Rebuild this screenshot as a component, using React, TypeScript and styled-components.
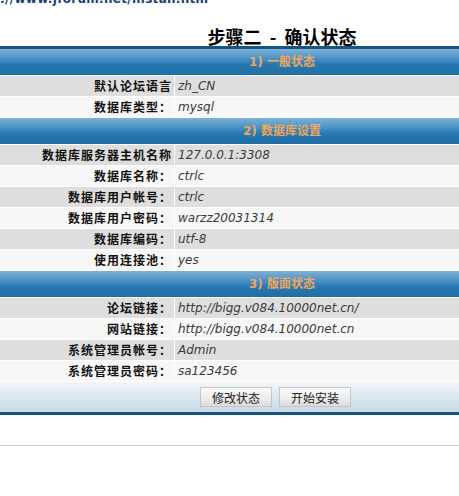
import React from 'react';
import styled, { createGlobalStyle } from 'styled-components';

const GlobalStyle = createGlobalStyle`
  html, body {
    margin: 0;
    padding: 0;
    background: #ffffff;
    overflow: hidden;
  }
`;

const Page = styled.div`
  width: 564px;
  font-family: 'DejaVu Sans', Verdana, sans-serif;
`;

const UrlText = styled.div`
  margin-top: -8px;
  height: 14px;
  line-height: 14px;
  font-size: 12px;
  font-weight: bold;
  letter-spacing: 0.3px;
  color: #1c3c7a;
  white-space: nowrap;
`;

const Title = styled.h1`
  margin: 19px 0 0;
  height: 21px;
  line-height: 22px;
  text-align: center;
  font-family: 'Noto Sans CJK SC', sans-serif;
  font-size: 18px;
  font-weight: bold;
  color: #000;
  white-space: pre;
`;

const Panel = styled.div`
  display: grid;
  grid-template-columns: 174px 1fr;
  column-gap: 1px;
  row-gap: 1px;
  background: #ffffff;
  border-top: 3px solid #17557f;
  border-bottom: 3px solid #17557f;
  width: 100vw;
  min-width: 564px;
`;

const SectionHeader = styled.div`
  grid-column: 1 / -1;
  height: 26px;
  line-height: 26px;
  text-align: center;
  font-family: 'DejaVu Sans', 'Noto Sans CJK SC', sans-serif;
  font-size: 12px;
  font-weight: bold;
  color: #f2a65c;
  background: linear-gradient(to bottom, #7db2d9 0%, #4d93c5 35%, #2878b0 60%, #1f6ea5 100%);
  width: 564px;
`;

const Label = styled.div<{ $alt: boolean }>`
  height: 20px;
  line-height: 20px;
  padding-right: 2px;
  text-align: right;
  font-family: 'Noto Sans CJK SC', sans-serif;
  font-size: 12px;
  font-weight: bold;
  letter-spacing: 1px;
  color: #111;
  white-space: nowrap;
  background: ${(p) => (p.$alt ? '#f7f7f7' : '#dedede')};
`;

const Value = styled.div<{ $alt: boolean }>`
  height: 20px;
  line-height: 20px;
  padding-left: 3px;
  font-family: 'DejaVu Sans', Verdana, sans-serif;
  font-size: 12px;
  font-style: italic;
  color: #3a3a3a;
  white-space: nowrap;
  background: ${(p) => (p.$alt ? '#f7f7f7' : '#dedede')};
`;

const ButtonBar = styled.div`
  grid-column: 1 / -1;
  height: 30px;
  display: flex;
  justify-content: center;
  align-items: center;
  gap: 7px;
  padding-right: 13px;
  width: 551px;
  background: linear-gradient(to bottom, #f2f6f9 0%, #dde8f0 50%, #c8dae8 100%);
`;

const Button = styled.button`
  width: 72px;
  height: 20px;
  padding: 0;
  font-family: 'Noto Sans CJK SC', sans-serif;
  font-size: 12px;
  color: #222;
  background: linear-gradient(to bottom, #fafafa 0%, #ececec 60%, #dcdcdc 100%);
  border: 1px solid #c4c4c4;
  border-radius: 0;
  cursor: pointer;
`;

const Divider = styled.hr`
  margin: 30px 0 0;
  border: none;
  border-top: 1px solid #c8c8c8;
  width: 100vw;
`;

type Field = [string, string];

const sections: { title: string; fields: Field[] }[] = [
  {
    title: '1) 一般状态',
    fields: [
      ['默认论坛语言', 'zh_CN'],
      ['数据库类型:', 'mysql'],
    ],
  },
  {
    title: '2) 数据库设置',
    fields: [
      ['数据库服务器主机名称', '127.0.0.1:3308'],
      ['数据库名称:', 'ctrlc'],
      ['数据库用户帐号:', 'ctrlc'],
      ['数据库用户密码:', 'warzz20031314'],
      ['数据库编码:', 'utf-8'],
      ['使用连接池:', 'yes'],
    ],
  },
  {
    title: '3) 版面状态',
    fields: [
      ['论坛链接:', 'http://bigg.v084.10000net.cn/'],
      ['网站链接:', 'http://bigg.v084.10000net.cn'],
      ['系统管理员帐号:', 'Admin'],
      ['系统管理员密码:', 'sa123456'],
    ],
  },
];

const App: React.FC = () => {
  return (
    <>
      <GlobalStyle />
      <Page>
        <UrlText>://www.jforum.net/install.htm</UrlText>
        <Title>{'步骤二  -  确认状态'}</Title>
        <Panel>
          {sections.map((section) => (
            <React.Fragment key={section.title}>
              <SectionHeader>{section.title}</SectionHeader>
              {section.fields.map(([label, value], i) => (
                <React.Fragment key={label}>
                  <Label $alt={i % 2 === 1}>{label.replace(':', '：')}</Label>
                  <Value $alt={i % 2 === 1}>{value}</Value>
                </React.Fragment>
              ))}
            </React.Fragment>
          ))}
          <ButtonBar>
            <Button type="button">修改状态</Button>
            <Button type="button">开始安装</Button>
          </ButtonBar>
        </Panel>
        <Divider />
      </Page>
    </>
  );
};

export default App;
